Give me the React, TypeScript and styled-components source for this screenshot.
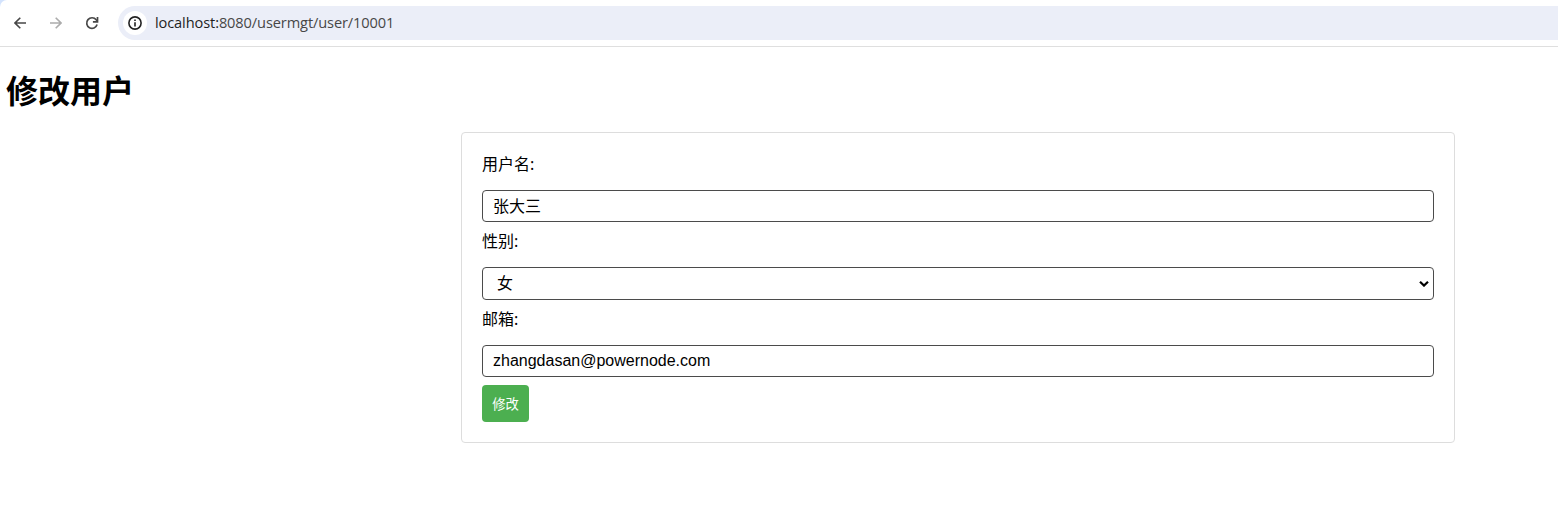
import React from "react";
import styled, { createGlobalStyle } from "styled-components";

const GlobalStyle = createGlobalStyle`
  * { box-sizing: border-box; }
  html, body { margin: 0; padding: 0; background: #fff; }
  body { height: 510px; overflow: hidden; color: #000; font-family: "Noto Sans CJK SC", sans-serif; }
`;

const Window = styled.div`
  display: flex;
  flex-direction: column;
  height: 510px;
  background: #fff;
`;

const TabStrip = styled.div`
  background: #d3e3fd;
`;

const Toolbar = styled.header`
  display: flex;
  align-items: center;
  height: 47px;
  padding: 0 0 1px 10px;
  background: #fff;
  border-bottom: 1px solid #dfdfdf;
  border-top-left-radius: 7px;
`;

const NavButton = styled.span<{ $muted?: boolean }>`
  display: flex;
  align-items: center;
  justify-content: center;
  width: 20px;
  height: 20px;
  margin-right: 16px;
  color: ${(p) => (p.$muted ? "#acacac" : "#474747")};
`;

const AddressBar = styled.div`
  display: flex;
  align-items: center;
  flex: 1;
  height: 34px;
  padding-left: 5px;
  background: #ebeef8;
  border-radius: 17px 0 0 17px;
`;

const SiteInfo = styled.span`
  display: flex;
  align-items: center;
  justify-content: center;
  width: 24px;
  height: 24px;
  margin-right: 8px;
  border-radius: 50%;
  background: #fff;
  color: #222;
`;

const Url = styled.span`
  padding-bottom: 2px;
  font: 14.6px/20px "Open Sans", sans-serif;
  letter-spacing: -0.11px;
  color: #474747;
  white-space: nowrap;
`;

const Host = styled.span`
  color: #1f1f1f;
`;

const Page = styled.main`
  display: flex;
  flex-direction: column;
`;

const Title = styled.h1`
  margin: 19px 0 0 6px;
  height: 66px;
  font-size: 32px;
  line-height: 47px;
  font-weight: 700;
`;

const Form = styled.form`
  display: flex;
  flex-direction: column;
  width: 994px;
  margin-left: 461px;
  padding: 20px;
  border: 1px solid #ddd;
  border-radius: 4px;
`;

const Label = styled.label`
  height: 37px;
  font: 16px/22px "Noto Sans", "Noto Sans CJK SC", sans-serif;
`;

const Input = styled.input<{ $lift?: number }>`
  height: 32px;
  margin: 0 0 8px;
  padding: 0 10px ${(p) => p.$lift ?? 0}px;
  border: 1px solid #4b4b4b;
  border-radius: 4px;
  outline: none;
  background: #fff;
  color: #000;
  font: 16px "Liberation Sans", "Noto Sans CJK SC", sans-serif;
`;

const SelectBox = styled.div`
  display: flex;
  align-items: center;
  justify-content: space-between;
  height: 33px;
  margin-bottom: 8px;
  padding: 0 4px 0 14px;
  border: 1px solid #4b4b4b;
  border-radius: 4px;
  font: 16px/22px "Liberation Sans", "Noto Sans CJK SC", sans-serif;
`;

const Submit = styled.button`
  align-self: flex-start;
  width: 47px;
  height: 37px;
  padding: 0;
  border: none;
  border-radius: 4px;
  background: #4caf50;
  color: #fff;
  font: 13.33px "Liberation Sans", "Noto Sans CJK SC", sans-serif;
`;

const BackIcon = () => (
  <svg width="12" height="12" viewBox="0 0 12 12" fill="none" stroke="currentColor" strokeWidth="1.6">
    <path d="M12 6H1.3M6.3 0.7 1 6l5.3 5.3" />
  </svg>
);

const ForwardIcon = () => (
  <svg width="12" height="12" viewBox="0 0 12 12" fill="none" stroke="currentColor" strokeWidth="1.6">
    <path d="M0 6h10.7M5.7 0.7 11 6l-5.3 5.3" />
  </svg>
);

const ReloadIcon = () => (
  <svg width="14" height="14" viewBox="0 0 14 14" fill="none" stroke="currentColor" strokeWidth="1.7">
    <path d="M12.1 8.6A5.3 5.3 0 1 1 11.2 3.8L12.2 5" />
    <path d="M12.5 1v4.8H7.9" />
  </svg>
);

const InfoIcon = () => (
  <svg width="14" height="14" viewBox="0 0 14 14">
    <circle cx="7" cy="7" r="6.1" fill="none" stroke="currentColor" strokeWidth="1.6" />
    <path fill="currentColor" d="M6.2 6.2h1.6v4.2H6.2zM6.2 3.5h1.6v1.6H6.2z" />
  </svg>
);

const Chevron = () => (
  <svg width="10" height="6" viewBox="0 0 10 6" fill="none" stroke="#000" strokeWidth="2.2">
    <path d="M1 0.8 5 4.6 9 0.8" />
  </svg>
);

export default function App() {
  return (
    <Window>
      <GlobalStyle />
      <TabStrip>
        <Toolbar>
          <NavButton><BackIcon /></NavButton>
          <NavButton $muted><ForwardIcon /></NavButton>
          <NavButton><ReloadIcon /></NavButton>
          <AddressBar>
            <SiteInfo><InfoIcon /></SiteInfo>
            <Url><Host>localhost:</Host>8080/usermgt/user/10001</Url>
          </AddressBar>
        </Toolbar>
      </TabStrip>
      <Page>
        <Title>修改用户</Title>
        <Form onSubmit={(e) => e.preventDefault()}>
          <Label htmlFor="username">用户名:</Label>
          <Input id="username" $lift={2} defaultValue="张大三" />
          <Label>性别:</Label>
          <SelectBox role="combobox" aria-label="性别">女<Chevron /></SelectBox>
          <Label htmlFor="email">邮箱:</Label>
          <Input id="email" defaultValue="zhangdasan@powernode.com" spellCheck={false} />
          <Submit type="submit">修改</Submit>
        </Form>
      </Page>
    </Window>
  );
}
